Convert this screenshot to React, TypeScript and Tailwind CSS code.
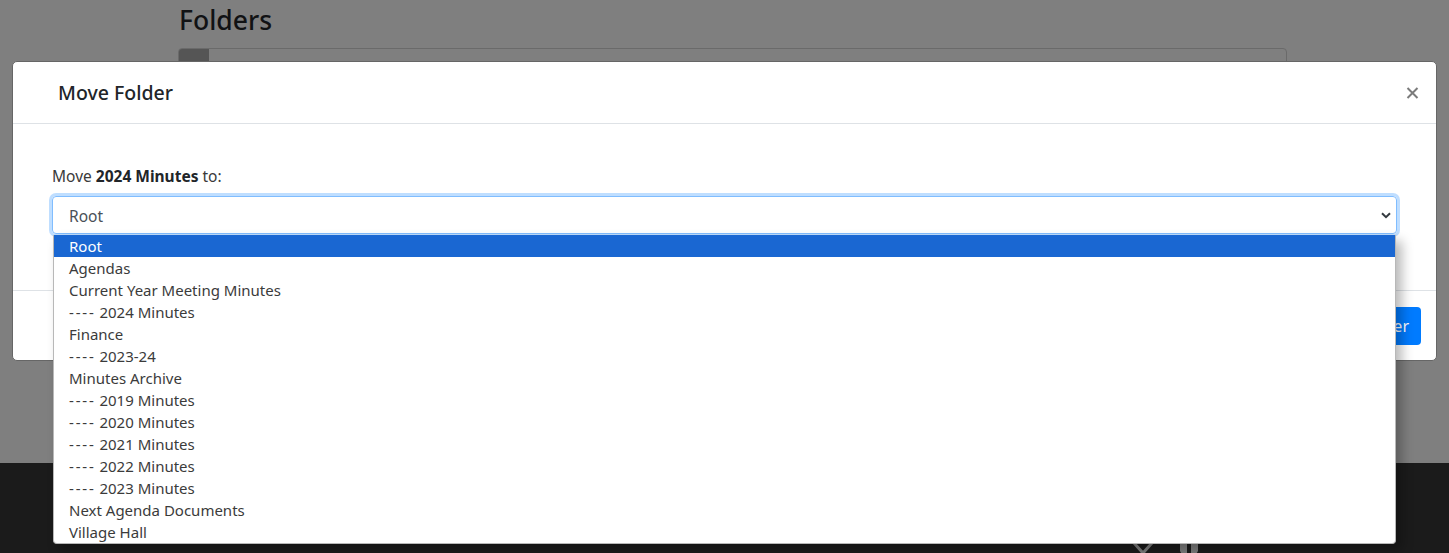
import React from "react";

const items = [
  "Root",
  "Agendas",
  "Current Year Meeting Minutes",
  "---- 2024 Minutes",
  "Finance",
  "---- 2023-24",
  "Minutes Archive",
  "---- 2019 Minutes",
  "---- 2020 Minutes",
  "---- 2021 Minutes",
  "---- 2022 Minutes",
  "---- 2023 Minutes",
  "Next Agenda Documents",
  "Village Hall",
];

function Label({ text }: { text: string }) {
  if (text.startsWith("---- ")) {
    return (
      <>
        <span className="tracking-[1.8px]">----</span> {text.slice(5)}
      </>
    );
  }
  return <>{text}</>;
}

export default function App() {
  return (
    <div className="relative w-[1449px] h-[553px] overflow-hidden bg-[#7f7f7f] font-['Noto_Sans',sans-serif]">
      {/* page under the backdrop */}
      <div className="h-[463px] pl-[178px] pr-[162px] pt-[3px]">
        <h3 className="pl-[1px] text-[26.5px] font-medium leading-[34px] text-[#111214]">Folders</h3>
        <div className="mt-[11px] flex h-[30px] rounded-t-[4px] border border-[#6a6a6a]">
          <div className="w-[30px] rounded-tl-[3px] bg-[#555555]" />
        </div>
      </div>
      <footer className="flex h-[90px] justify-end gap-[23px] bg-[#1b1b1b] pr-[249px] pt-[78px]">
        <svg width="24" height="24" viewBox="0 0 24 24">
          <path d="M3 2 L21 22 M21 2 L3 22" stroke="#7d7d7d" strokeWidth="3" />
        </svg>
        <svg width="22" height="24" viewBox="0 0 22 24">
          <path d="M2 3 L9 3 L9 22 L2 10 Z M13 3 L20 3 L20 10 L13 22 Z" fill="#7d7d7d" />
        </svg>
      </footer>

      {/* modal */}
      <div className="absolute left-[12px] top-[61px] w-[1425px] rounded-[5px] border border-[#666666] bg-white text-[#212529]">
        <div className="flex h-[62px] items-center justify-between border-b border-[#dee2e6] pl-[45px] pr-[17px]">
          <h5 className="text-[19.5px] font-medium leading-[24px] text-[#212529]">Move Folder</h5>
          <svg width="13" height="12" viewBox="0 0 13 12">
            <path d="M1.5 1 L11.5 11 M11.5 1 L1.5 11" stroke="#7b7b7b" strokeWidth="2" />
          </svg>
        </div>
        <div className="px-[39px] pb-[56px] pt-[40px]">
          <div className="mb-[8px] text-[15.5px] leading-[24px] text-[#3a3a3a]">
            Move <b className="font-bold text-[#212529]">2024 Minutes</b> to:
          </div>
          <div className="relative">
            <div className="flex h-[38px] items-center justify-between rounded-[4px] border border-[#80bdff] pl-[16px] pr-[5px] text-[15.5px] leading-[24px] text-[#495057] shadow-[0_0_0_3px_rgba(0,123,255,0.25)]">
              <span className="translate-y-[1px]">Root</span>
              <svg width="10" height="7" viewBox="0 0 10 7">
                <path d="M1 1.2 L5 5.2 L9 1.2" stroke="#343a40" strokeWidth="2" fill="none" />
              </svg>
            </div>
            <div className="absolute left-[1px] right-[1px] top-[39px] z-10 rounded-b-[4px] border-x border-b border-[#b8b8b8] bg-white shadow-[6px_6px_12px_rgba(0,0,0,0.28)]">
              {items.map((it, i) => (
                <div
                  key={i}
                  className={
                    i === 0
                      ? "h-[22px] whitespace-pre bg-[#1a67d2] pl-[15px] text-[15px] leading-[22px] text-white"
                      : "h-[22px] whitespace-pre pl-[15px] text-[15px] leading-[22px] text-[#3b3b3b]"
                  }
                >
                  <Label text={it} />
                </div>
              ))}
            </div>
          </div>
        </div>
        <div className="flex justify-end gap-[8px] border-t border-[#dee2e6] pb-[15px] pr-[15px] pt-[16px]">
          <button className="h-[38px] rounded-[4px] bg-[#6c757d] px-[12px] text-[16px] text-white">Close</button>
          <button className="h-[38px] rounded-[4px] bg-[#007bff] px-[12px] text-[16px] text-white">Move Folder</button>
        </div>
      </div>
    </div>
  );
}
